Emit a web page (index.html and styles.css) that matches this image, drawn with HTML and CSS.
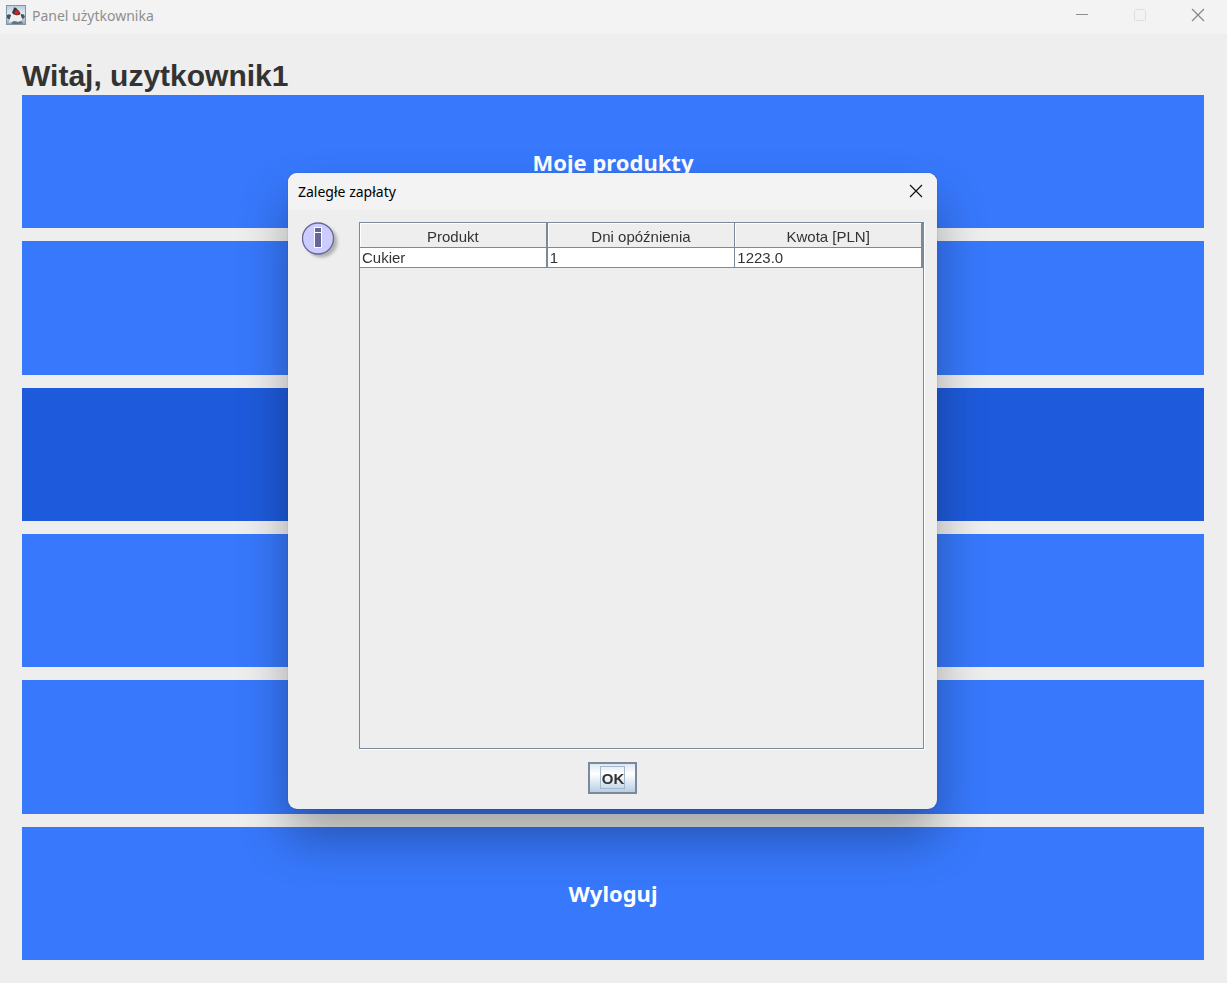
FILE: index.html
```html
<!DOCTYPE html>
<html lang="pl">
<head>
<meta charset="utf-8">
<title>Panel użytkownika</title>
<link rel="stylesheet" href="styles.css">
</head>
<body>
<div class="window">
  <header class="titlebar">
    <svg class="app-icon" viewBox="0 0 20 20">
      <defs><linearGradient id="sky" x1="0" y1="0" x2="0" y2="1"><stop offset="0" stop-color="#b9cbdb"/><stop offset=".5" stop-color="#e8eef3"/><stop offset="1" stop-color="#8ba0b4"/></linearGradient></defs>
      <rect x=".5" y=".5" width="19" height="19" fill="url(#sky)" stroke="#8097ab"/>
      <path d="M1 10 Q3 8.500 5 10 L6 13 L3 14.500 L1 13Z M15 9 L18 9.500 L19 12 L17 14 L14 12Z" fill="#4d5259"/>
      <path d="M6 8 Q10 11 14 9 Q16 12 16 15 L13 17 L8 16 L3 18 Q4 12 6 8Z" fill="#eceef0"/>
      <path d="M8 2.500 Q10 2 11.500 4.500 Q14 6 14.500 9 Q12 11 9.500 10 Q7 9.500 6 7.500 Q7.500 5 8 2.500Z" fill="#34363a"/>
      <path d="M5 18 L8 16 L12 17 L15 16 L17 18.500 L12 19 L7 19Z" fill="#6b7178"/>
      <circle cx="10.700" cy="7.500" r="2.200" fill="#d8201c"/>
    </svg>
    <span class="window-name">Panel użytkownika</span>
    <div class="window-controls">
      <button class="control"><svg class="glyph" viewBox="0 0 14 14"><path d="M1 6.500H13" stroke="#8f8f8f"/></svg></button>
      <button class="control" disabled><svg class="glyph" viewBox="0 0 14 14"><rect x="1.500" y="1.500" width="11" height="11" rx="1" stroke="#dedede" fill="none"/></svg></button>
      <button class="control"><svg class="glyph" viewBox="0 0 14 14"><path d="M1 1L13 13M13 1L1 13" stroke="#858585" stroke-width="1.200"/></svg></button>
    </div>
  </header>
  <main class="panel">
    <h1 class="welcome">Witaj, uzytkownik1</h1>
    <nav class="menu">
      <button class="menu-item">Moje produkty</button>
      <button class="menu-item"></button>
      <button class="menu-item menu-item-active"></button>
      <button class="menu-item"></button>
      <button class="menu-item"></button>
      <button class="menu-item">Wyloguj</button>
    </nav>
  </main>
</div>
<div class="overlay">
  <section class="dialog" role="dialog" aria-labelledby="dialog-name">
    <header class="dialog-bar">
      <h2 class="dialog-name" id="dialog-name">Zaległe zapłaty</h2>
      <button class="dialog-close"><svg class="glyph" viewBox="0 0 14 14"><path d="M1 1L13 13M13 1L1 13" stroke="#111" stroke-width="1.200"/></svg></button>
    </header>
    <div class="dialog-body">
      <svg class="info" viewBox="0 0 40 40">
        <defs><filter id="soft" x="-30%" y="-30%" width="160%" height="160%"><feGaussianBlur stdDeviation="1.600"/></filter></defs>
        <circle cx="19.500" cy="19.500" r="16" fill="#999" opacity=".7" filter="url(#soft)"/>
        <circle cx="16" cy="16.500" r="15.500" fill="#ccccff" stroke="#666699" stroke-width="1.300"/>
        <rect x="12" y="5" width="8" height="21" fill="#fff"/>
        <rect x="13" y="6" width="6" height="4" fill="#666699"/>
        <rect x="13" y="11" width="6" height="14" fill="#666699"/>
      </svg>
      <div class="scroll-pane">
        <table class="payments">
          <thead><tr><th>Produkt</th><th>Dni opóźnienia</th><th>Kwota [PLN]</th></tr></thead>
          <tbody><tr><td>Cukier</td><td>1</td><td>1223.0</td></tr></tbody>
        </table>
      </div>
    </div>
    <footer class="dialog-footer">
      <button class="ok"><span class="ok-label">OK</span></button>
    </footer>
  </section>
</div>
</body>
</html>
```
FILE: styles.css
```css
* { box-sizing: border-box; }
body {
  margin: 0;
  background: #eeeeee;
  color: #333333;
  font-family: "Liberation Sans", Arial, sans-serif;
  font-size: 15px;
}
button { margin: 0; padding: 0; border: 0; background: none; font: inherit; color: inherit; }
.window { display: flex; flex-direction: column; min-height: 100vh; }
.titlebar {
  display: flex;
  align-items: center;
  height: 34px;
  padding: 0 0 4px 6px;
  background: #f3f3f3;
}
.app-icon { width: 20px; height: 20px; }
.window-name {
  margin-left: 6px;
  color: #8f8f8f;
  font-family: "Noto Sans", sans-serif;
  font-size: 14px;
}
.window-controls { display: flex; height: 100%; margin-left: auto; }
.control { display: flex; align-items: center; justify-content: center; width: 58px; }
.glyph { display: block; width: 14px; height: 14px; }
.panel {
  display: flex;
  flex: 1;
  flex-direction: column;
  padding: 23px 23px 23px 22px;
}
.welcome { margin: 0; font-size: 30px; line-height: 38px; }
.menu { display: grid; flex: 1; grid-auto-rows: 1fr; gap: 13px; }
.menu-item {
  background: #3778fc;
  color: #ffffff;
  font-family: "Noto Sans", sans-serif;
  font-size: 22px;
  font-weight: 700;
}
.menu-item-active { background: #1e5bdc; }
.overlay {
  position: fixed;
  inset: 0;
  display: flex;
  align-items: center;
  justify-content: center;
  padding: 0 2px 2px 0;
}
.dialog {
  display: flex;
  flex-direction: column;
  width: 649px;
  max-width: 100%;
  overflow: hidden;
  border-radius: 9px;
  background: #eeeeee;
  box-shadow: 0 0 1px rgba(0, 0, 0, 0.5), 0 28px 50px rgba(0, 0, 0, 0.32);
}
.dialog-bar {
  display: flex;
  align-items: center;
  justify-content: space-between;
  height: 37px;
  padding: 0 14px 0 10px;
  background: #f3f3f3;
}
.dialog-name {
  margin: 0;
  color: #000000;
  font-family: "Noto Sans", sans-serif;
  font-size: 14px;
  font-weight: 400;
}
.dialog-body { display: flex; gap: 17px; padding: 12px 13px 0 14px; }
.info { flex: none; width: 40px; height: 40px; }
.scroll-pane {
  flex: 1;
  min-height: 527px;
  border: 1px solid #7a8a99;
  box-shadow: 1px 1px #ffffff;
}
.payments { width: 100%; border-collapse: separate; border-spacing: 0; table-layout: fixed; }
.payments th,
.payments td {
  border-right: 1px solid #7a8a99;
  border-bottom: 1px solid #7a8a99;
  line-height: 19px;
}
.payments th { height: 25px; padding: 4px 0 1px; font-weight: 400; box-shadow: inset 1px 1px #ffffff; }
.payments td { padding: 0 2px; background: #ffffff; }
.payments th:first-child,
.payments td:first-child,
.payments th:last-child,
.payments td:last-child { border-right-width: 2px; }
.dialog-footer { display: flex; justify-content: center; padding: 13px 0 15px; }
.ok {
  display: flex;
  align-items: center;
  justify-content: center;
  width: 49px;
  height: 32px;
  border: 2px solid #7a8a99;
  background: linear-gradient(#dde8f3, #ffffff 35%, #b8cfe5);
  font-weight: 700;
}
.ok-label { padding: 3px 0 0 1px; border: 1px solid #a3b8cc; line-height: 18px; }
```
